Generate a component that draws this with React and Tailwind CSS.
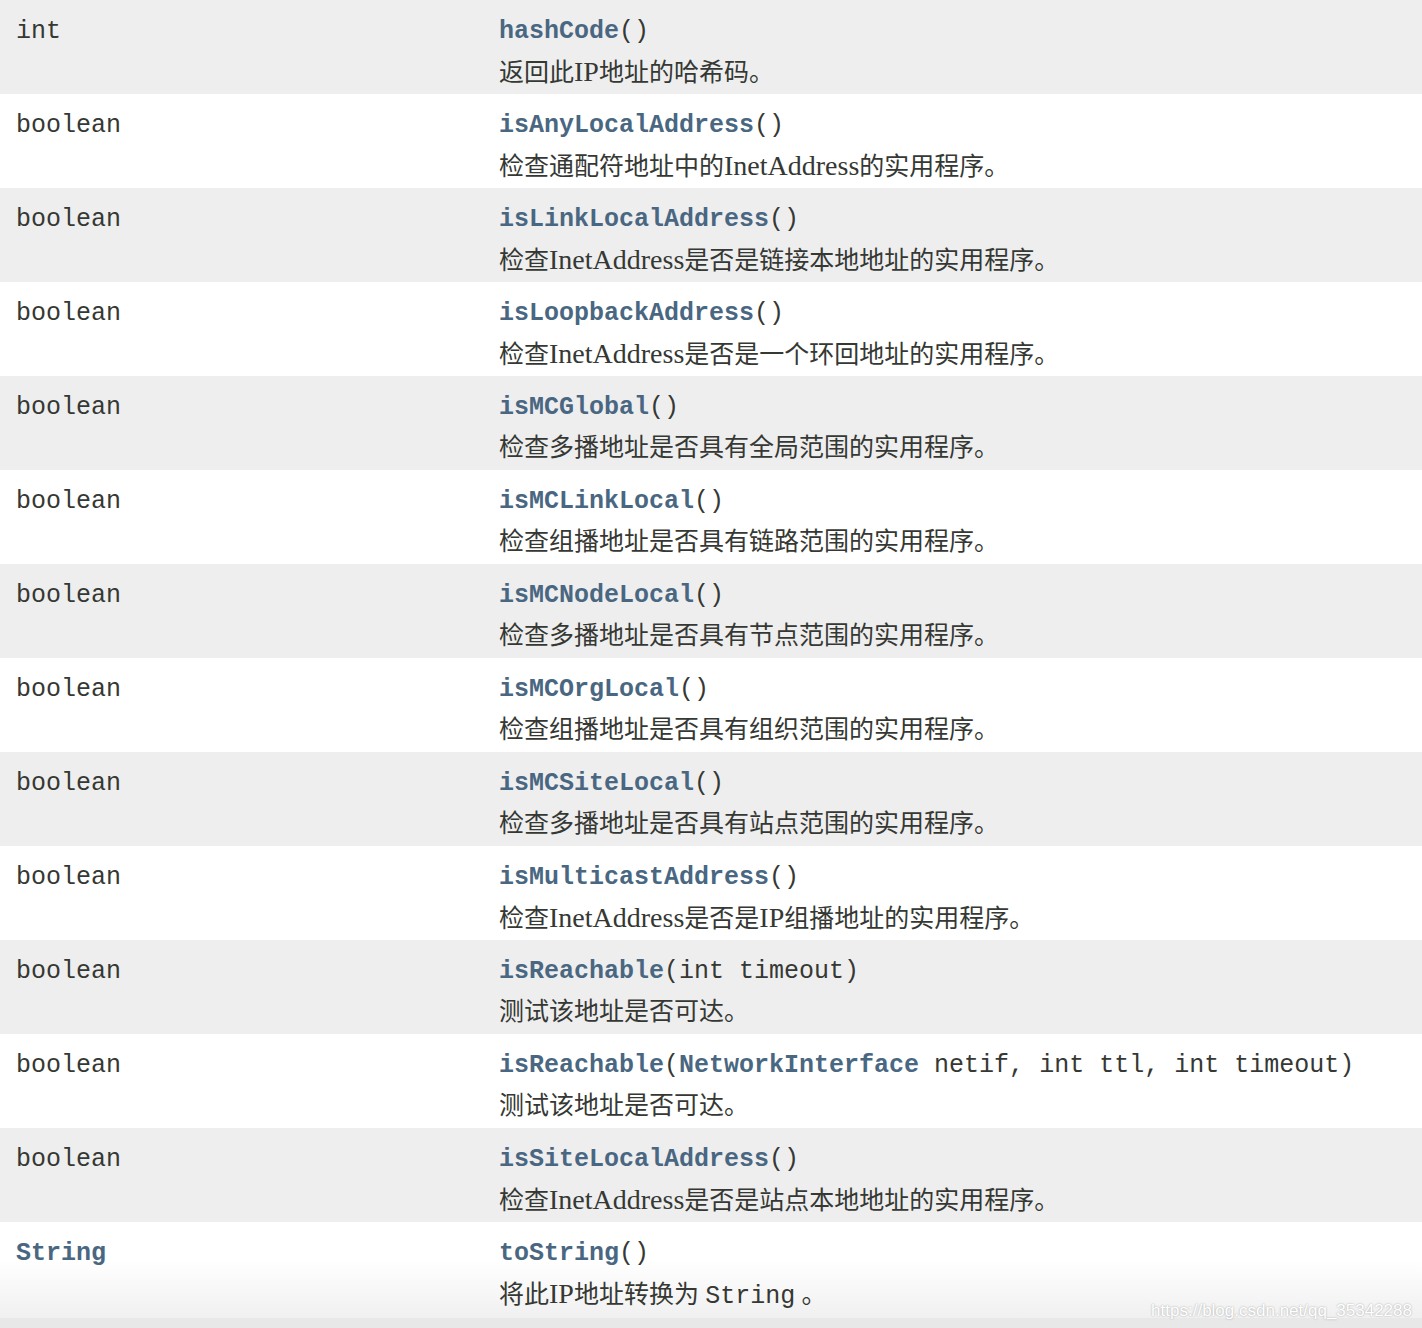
const rows = [
  { type: "int", name: "hashCode", args: [], desc: "返回此IP地址的哈希码。" },
  { type: "boolean", name: "isAnyLocalAddress", args: [], desc: "检查通配符地址中的InetAddress的实用程序。" },
  { type: "boolean", name: "isLinkLocalAddress", args: [], desc: "检查InetAddress是否是链接本地地址的实用程序。" },
  { type: "boolean", name: "isLoopbackAddress", args: [], desc: "检查InetAddress是否是一个环回地址的实用程序。" },
  { type: "boolean", name: "isMCGlobal", args: [], desc: "检查多播地址是否具有全局范围的实用程序。" },
  { type: "boolean", name: "isMCLinkLocal", args: [], desc: "检查组播地址是否具有链路范围的实用程序。" },
  { type: "boolean", name: "isMCNodeLocal", args: [], desc: "检查多播地址是否具有节点范围的实用程序。" },
  { type: "boolean", name: "isMCOrgLocal", args: [], desc: "检查组播地址是否具有组织范围的实用程序。" },
  { type: "boolean", name: "isMCSiteLocal", args: [], desc: "检查多播地址是否具有站点范围的实用程序。" },
  { type: "boolean", name: "isMulticastAddress", args: [], desc: "检查InetAddress是否是IP组播地址的实用程序。" },
  { type: "boolean", name: "isReachable", args: [{ t: "int", n: "timeout" }], desc: "测试该地址是否可达。" },
  {
    type: "boolean",
    name: "isReachable",
    args: [
      { t: "NetworkInterface", n: "netif", link: true },
      { t: "int", n: "ttl" },
      { t: "int", n: "timeout" },
    ],
    desc: "测试该地址是否可达。",
  },
  { type: "boolean", name: "isSiteLocalAddress", args: [], desc: "检查InetAddress是否是站点本地地址的实用程序。" },
];

const mono = "font-['Liberation_Mono','Courier_New',monospace]";
const serif = "font-['Liberation_Serif','Noto_Sans_CJK_SC',serif]";

// latin runs in the description are drawn a bit larger than the CJK text
const Desc = ({ text }) => (
  <>
    {text.split(/([A-Za-z]+)/).map((part, i) =>
      /^[A-Za-z]+$/.test(part) ? (
        <span key={i} className="text-[28px]">{part}</span>
      ) : (
        <span key={i}>{part}</span>
      )
    )}
  </>
);

const Signature = ({ name, args }) => (
  <div className={`${mono} text-[25px] leading-[36px] h-[36px] whitespace-nowrap`}>
    <span className="font-bold text-[#4a6782]">{name}</span>
    <span>(</span>
    {args.map((a, i) => (
      <span key={i}>
        {a.link ? <span className="font-bold text-[#4a6782]">{a.t}</span> : a.t}
        {"\u00a0" + a.n}
        {i < args.length - 1 ? ",\u00a0" : ""}
      </span>
    ))}
    <span>)</span>
  </div>
);

export default function App() {
  return (
    <div className="w-[1422px] h-[1328px] bg-white text-[#353833] overflow-hidden relative">
      {rows.map((r, idx) => (
        <div
          key={idx}
          className={`grid grid-cols-[499px_1fr] h-[94px] pt-[14px] ${idx % 2 === 0 ? "bg-[#eeeeef]" : "bg-white"}`}
        >
          <div className={`${mono} pl-4 text-[25px] leading-[36px] h-[36px]`}>{r.type}</div>
          <div>
            <Signature name={r.name} args={r.args} />
            <div className={`${serif} mt-[4px] text-[25px] leading-[36px] h-[36px] whitespace-nowrap`}>
              <Desc text={r.desc} />
            </div>
          </div>
        </div>
      ))}

      <div className="grid grid-cols-[499px_1fr] h-[96px] pt-[14px] bg-gradient-to-b from-white from-40% to-[#f0f0f0]">
        <div className={`${mono} pl-4 text-[25px] leading-[36px] h-[36px] font-bold text-[#4a6782]`}>String</div>
        <div>
          <Signature name="toString" args={[]} />
          <div className={`${serif} mt-[4px] text-[25px] leading-[36px] h-[36px] whitespace-nowrap`}>
            <Desc text="将此IP地址转换为" /> <span className={mono}>String</span> 。
          </div>
        </div>
      </div>
      <div className="h-[10px] bg-[#e8e8e8]" />

      <div className="absolute right-[10px] top-[1298px] font-['Liberation_Sans',Arial,sans-serif] text-[17px] text-white [text-shadow:0_0_2px_rgba(0,0,0,0.35)]">
        https://blog.csdn.net/qq_35342288
      </div>
    </div>
  );
}
